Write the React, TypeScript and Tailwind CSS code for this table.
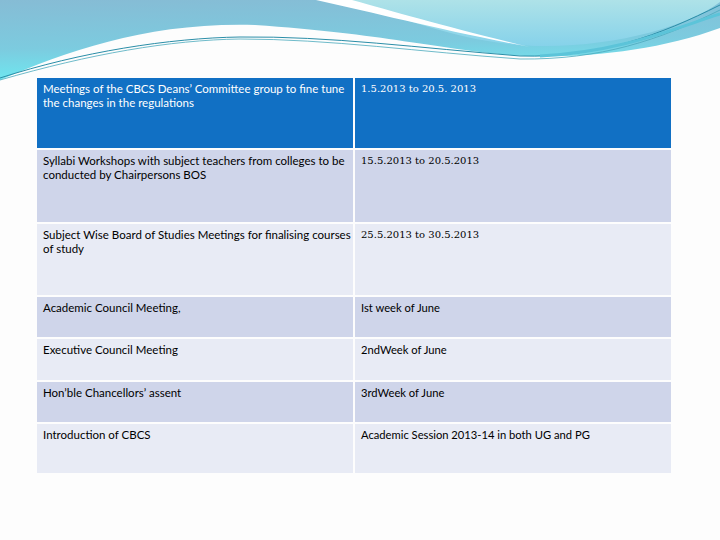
const ROWS = [
  { act: "Meetings of the CBCS Deans’ Committee group to fine tune the changes in the regulations", when: "1.5.2013 to 20.5. 2013", h: "h-[70px]", bg: "bg-[#1170c4]", head: true },
  { act: "Syllabi Workshops with subject teachers from colleges to be conducted by Chairpersons BOS", when: "15.5.2013 to 20.5.2013", h: "h-[72px]", bg: "bg-[#cfd5ea]" },
  { act: "Subject Wise Board of Studies Meetings for finalising courses of study", when: "25.5.2013 to 30.5.2013", h: "h-[71px]", bg: "bg-[#e8ebf5]" },
  { act: "Academic Council Meeting,", when: "Ist week of June", h: "h-[40px]", bg: "bg-[#cfd5ea]" },
  { act: "Executive Council Meeting", when: "2ndWeek of June", h: "h-[41px]", bg: "bg-[#e8ebf5]" },
  { act: "Hon’ble Chancellors’ assent", when: "3rdWeek of June", h: "h-[40px]", bg: "bg-[#cfd5ea]" },
  { act: "Introduction of CBCS", when: "Academic Session 2013-14 in both UG and PG", h: "h-[49px]", bg: "bg-[#e8ebf5]" },
]

const SERIF_DATES = 3   // the first rows use a serif face for the dates

function Wave() {
  return (
    <svg className="absolute left-0 top-0" width="720" height="90" viewBox="0 0 720 90">
      <defs>
        <linearGradient id="gl" x1="0" y1="0" x2="0.15" y2="1">
          <stop offset="0" stopColor="#86bcd5" />
          <stop offset="0.6" stopColor="#7ccbdf" />
          <stop offset="1" stopColor="#6ee8f0" />
        </linearGradient>
        <linearGradient id="gr" x1="0" y1="0" x2="0" y2="1">
          <stop offset="0" stopColor="#aee2e8" />
          <stop offset="1" stopColor="#86d2ea" />
        </linearGradient>
      </defs>
      <path d="M0,0 H720 V28 C660,50 590,58 525,56 C450,52 390,34 255,25 C150,22 70,50 0,80 Z" fill="url(#gl)" />
      <path d="M345,0 H720 V2 C690,25 620,46 545,46 C470,46 410,20 345,0 Z" fill="url(#gr)" />
      <path d="M316,0 C380,14 440,30 530,47 C450,28 395,12 352,0 Z" fill="#ffffff" />
      <path d="M0,78 C80,52 170,38 240,37 C330,36 420,48 520,56 C600,58 660,35 720,5" stroke="#2b8ea8" strokeWidth="1" fill="none" />
      <path d="M0,80 C90,54 170,40 240,39 C330,39 420,52 520,59 C600,60 660,40 720,10" stroke="#4aa9bd" strokeWidth="0.8" fill="none" />
      <path d="M540,56 C620,52 670,30 720,14" stroke="#5cc4d9" strokeWidth="3" fill="none" />
    </svg>
  )
}

export default function App() {
  return (
    <div className="relative w-[720px] h-[540px] bg-[#fdfdfd] overflow-hidden font-['Lato','Open_Sans',sans-serif]">
      <Wave />
      <div className="relative pt-[78px] pl-[37px]">
        <div className="grid grid-cols-[316px_316px] gap-[2px]">
          {ROWS.map((r, i) => (
            <div key={i} className="contents">
              <div className={`${r.bg} ${r.h} pl-[6px] pr-[2px] pt-[4px] text-[11.5px] leading-[14px] ${r.head ? 'text-white' : 'text-black'}`}>
                {r.act}
              </div>
              <div
                className={`${r.bg} ${r.h} px-[6px] pt-[4px] leading-[14px] ${r.head ? 'text-white' : 'text-black'} ${i < SERIF_DATES ? "font-['DejaVu_Serif',serif] text-[10px]" : 'text-[11.2px]'}`}
              >
                {r.when}
              </div>
            </div>
          ))}
        </div>
      </div>
    </div>
  )
}
